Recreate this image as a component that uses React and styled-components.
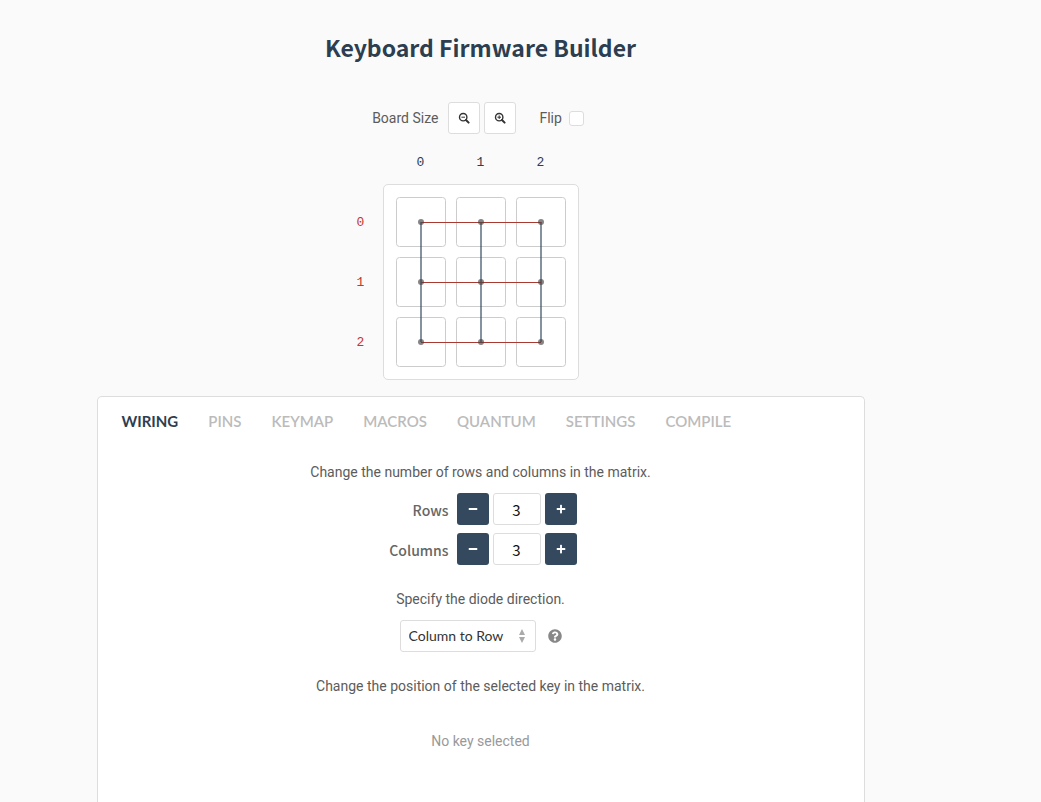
import React, { useState } from "react";
import styled, { createGlobalStyle } from "styled-components";
import { FaMinus, FaPlus, FaQuestionCircle } from "react-icons/fa";

const GlobalStyle = createGlobalStyle`
  *, *::before, *::after { box-sizing: border-box; }
  body {
    margin: 0;
    background: #fafafa;
    color: #5c5c5c;
    font-family: Roboto, "Liberation Sans", sans-serif;
    font-size: 14px;
    font-weight: 400;
    line-height: 24px;
  }
  button, input, select { font: inherit; margin: 0; }
`;

const Page = styled.main`
  display: flex;
  flex-direction: column;
  align-items: center;
  min-height: 100vh;
  padding: 31px 80px 0 0;
`;

const Title = styled.h1`
  margin: 0 0 39px;
  color: #2c3e50;
  font-family: "Noto Sans CJK SC", sans-serif;
  font-size: 23px;
  font-weight: 700;
  line-height: 32px;
`;

const Toolbar = styled.div`
  display: flex;
  align-items: center;
  gap: 4px;
`;

const ToolLabel = styled.span`
  margin-right: 6px;
`;

const IconButton = styled.button`
  display: flex;
  align-items: center;
  justify-content: center;
  width: 32px;
  height: 32px;
  padding: 0;
  border: 1px solid #ddd;
  border-radius: 3px;
  background: #fff;
  color: #333;
  cursor: pointer;
`;

const FlipLabel = styled.label`
  display: flex;
  align-items: center;
  gap: 7px;
  padding: 0 5px 0 19px;
`;

const CheckBox = styled.input`
  appearance: none;
  width: 15px;
  height: 15px;
  border: 1px solid #ddd;
  border-radius: 3px;
  background: #fff;
  &:checked { background: #34495e; }
`;

const Board = styled.div`
  display: grid;
  grid-template-columns: 44px 196px 44px;
  grid-template-rows: 50px 196px;
  font: 13px/20px "Liberation Mono", monospace;
`;

const ColumnLabels = styled.div`
  grid-area: 1 / 2;
  display: flex;
  justify-content: center;
  padding-top: 19px;
  color: #2c3e50;
`;

const RowLabels = styled.div`
  grid-area: 2 / 1;
  display: flex;
  flex-direction: column;
  justify-content: center;
  padding-top: 2px;
  color: #c0392b;
`;

const AxisLabel = styled.span`
  width: ${(p) => (p.$row ? "44px" : "60px")};
  height: ${(p) => (p.$row ? "60px" : "20px")};
  line-height: ${(p) => (p.$row ? "60px" : "20px")};
  text-align: center;
`;

const Matrix = styled.div`
  grid-area: 2 / 2;
  padding: 12px;
  border: 1px solid #ddd;
  border-radius: 5px;
  background: #fff;
`;

const Drawing = styled.svg`
  display: block;
`;

const Panel = styled.section`
  display: flex;
  flex: 1;
  flex-direction: column;
  width: 100%;
  max-width: 768px;
  margin-top: 16px;
  padding: 12px 16px 40px;
  border: 1px solid #ddd;
  border-bottom: 0;
  border-radius: 5px 5px 0 0;
  background: #fff;
`;

const Tabs = styled.nav`
  display: flex;
  gap: 14px;
`;

const Tab = styled.button`
  padding: 0 8px;
  border: 0;
  background: none;
  color: ${(p) => (p.$active ? "#2c3e50" : "#bbb")};
  font: ${(p) => (p.$active ? 700 : 600)} 15px/24px Lato, sans-serif;
  cursor: pointer;
`;

const Content = styled.div`
  display: flex;
  flex-direction: column;
  align-items: center;
  padding-top: 27px;
`;

const Hint = styled.p`
  margin: 0 0 9px;
`;

const Fields = styled.div`
  margin-bottom: 14px;
`;

const Field = styled.div`
  display: grid;
  grid-template-columns: 68px 32px 48px 32px;
  column-gap: 4px;
  align-items: center;
  margin-bottom: 8px;
`;

const FieldLabel = styled.label`
  padding: 2px 4px 0 0;
  color: #666;
  font-family: "Noto Sans CJK SC", sans-serif;
  font-weight: 500;
  text-align: right;
`;

const StepButton = styled(IconButton)`
  border: 0;
  background: #34495e;
  color: #fff;
`;

const NumberInput = styled.input`
  width: 48px;
  height: 32px;
  padding: 0;
  border: 1px solid #ddd;
  border-radius: 3px;
  background: #fff;
  color: #111;
  font-family: "Noto Sans CJK SC", sans-serif;
  font-size: 15px;
  text-align: center;
`;

const Direction = styled.div`
  display: flex;
  align-items: center;
  gap: 12px;
  margin-bottom: 22px;
`;

const SelectBox = styled.div`
  display: grid;
  align-items: center;
  width: 136px;
`;

const Select = styled.select`
  grid-area: 1 / 1;
  appearance: none;
  width: 100%;
  height: 32px;
  padding: 0 8px;
  border: 1px solid #ddd;
  border-radius: 3px;
  background: #fff;
  color: #333;
  font: 14px/24px Lato, sans-serif;
`;

const Arrows = styled.svg`
  grid-area: 1 / 1;
  justify-self: end;
  margin-right: 11px;
  pointer-events: none;
`;

const HelpButton = styled.button`
  display: flex;
  padding: 0;
  border: 0;
  background: none;
  color: #888;
`;

const Empty = styled.p`
  margin: 22px 0 0;
  color: #999;
`;

const INDEXES = [0, 1, 2];
const TABS = ["WIRING", "PINS", "KEYMAP", "MACROS", "QUANTUM", "SETTINGS", "COMPILE"];
const center = (i) => i * 60 + 25;

function ZoomIcon({ zoomIn }) {
  return (
    <svg width="12" height="12" viewBox="0 0 12 12" fill="none" stroke="currentColor" aria-hidden="true">
      <circle cx="5.2" cy="5.2" r="3.7" strokeWidth="1.4" />
      <path d="M8 8L10.6 10.6" strokeWidth="2" strokeLinecap="round" />
      <path d={zoomIn ? "M3.4 5.2H7M5.2 3.4V7" : "M3.4 5.2H7"} strokeWidth="1" />
    </svg>
  );
}

function Wiring() {
  return (
    <Drawing width="170" height="170" viewBox="0 0 170 170" role="img" aria-label="Key matrix">
      {INDEXES.map((r) => INDEXES.map((c) => (
        <rect key={`${r}${c}`} x={c * 60 + 0.5} y={r * 60 + 0.5} width="49" height="49" rx="3" fill="#fff" stroke="#ccc" />
      )))}
      {INDEXES.map((c) => (
        <path key={c} d={`M${center(c)} 25V145`} stroke="#34495e" strokeWidth="2" opacity=".6" />
      ))}
      {INDEXES.map((r) => (
        <path key={r} d={`M25 ${center(r) + 0.5}H145`} stroke="#a93a32" />
      ))}
      {INDEXES.map((r) => INDEXES.map((c) => (
        <circle key={`${r}${c}`} cx={center(c)} cy={center(r)} r="3" fill="#444" opacity=".65" />
      )))}
    </Drawing>
  );
}

function Stepper({ id, label }) {
  const [value, setValue] = useState(3);
  return (
    <Field>
      <FieldLabel htmlFor={id}>{label}</FieldLabel>
      <StepButton aria-label={`Fewer ${label}`} onClick={() => setValue(value - 1)}><FaMinus size={10} /></StepButton>
      <NumberInput id={id} value={value} onChange={(e) => setValue(Number(e.target.value) || 0)} />
      <StepButton aria-label={`More ${label}`} onClick={() => setValue(value + 1)}><FaPlus size={10} /></StepButton>
    </Field>
  );
}

export default function App() {
  const [tab, setTab] = useState("WIRING");
  return (
    <Page>
      <GlobalStyle />
      <Title>Keyboard Firmware Builder</Title>
      <Toolbar>
        <ToolLabel>Board Size</ToolLabel>
        <IconButton aria-label="Zoom out"><ZoomIcon /></IconButton>
        <IconButton aria-label="Zoom in"><ZoomIcon zoomIn /></IconButton>
        <FlipLabel>Flip<CheckBox type="checkbox" /></FlipLabel>
      </Toolbar>
      <Board>
        <ColumnLabels>{INDEXES.map((i) => <AxisLabel key={i}>{i}</AxisLabel>)}</ColumnLabels>
        <RowLabels>{INDEXES.map((i) => <AxisLabel key={i} $row>{i}</AxisLabel>)}</RowLabels>
        <Matrix><Wiring /></Matrix>
      </Board>
      <Panel>
        <Tabs>
          {TABS.map((t) => <Tab key={t} $active={t === tab} onClick={() => setTab(t)}>{t}</Tab>)}
        </Tabs>
        <Content>
          <Hint>Change the number of rows and columns in the matrix.</Hint>
          <Fields>
            <Stepper id="rows" label="Rows" />
            <Stepper id="columns" label="Columns" />
          </Fields>
          <Hint as="label" htmlFor="direction">Specify the diode direction.</Hint>
          <Direction>
            <SelectBox>
              <Select id="direction"><option>Column to Row</option><option>Row to Column</option></Select>
              <Arrows width="6" height="14" viewBox="0 0 6 14" fill="#aaa"><path d="M3 0L6 6H0zM3 14L0 8H6z" /></Arrows>
            </SelectBox>
            <HelpButton aria-label="Help"><FaQuestionCircle size={14} /></HelpButton>
          </Direction>
          <Hint>Change the position of the selected key in the matrix.</Hint>
          <Empty>No key selected</Empty>
        </Content>
      </Panel>
    </Page>
  );
}
